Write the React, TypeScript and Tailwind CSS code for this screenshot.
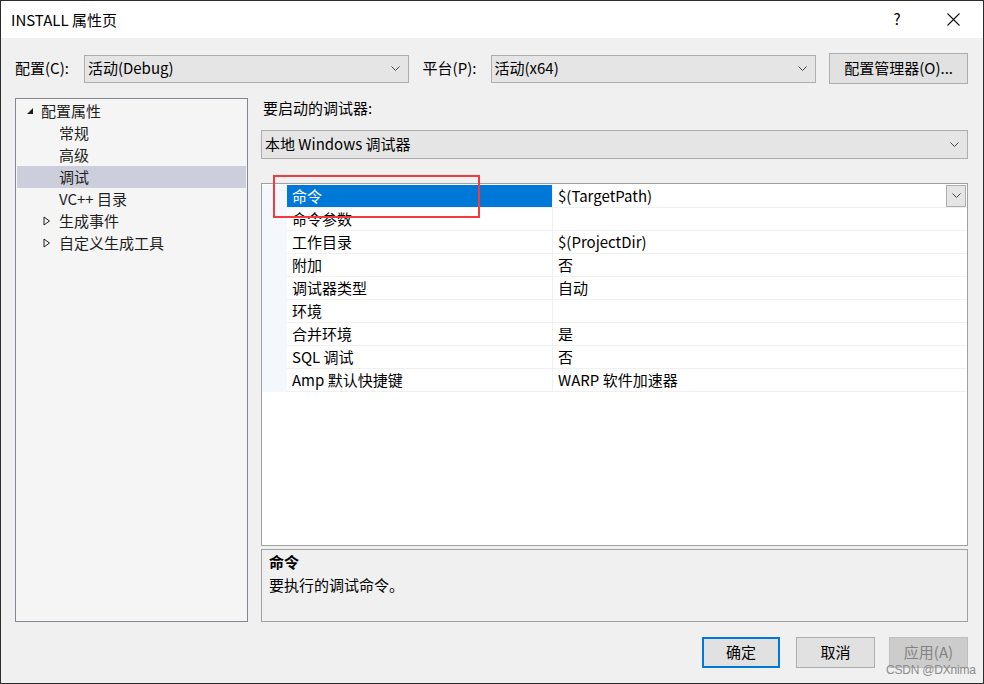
import React from "react";

const Chevron = () => (
  <svg width="9" height="6" viewBox="0 0 9 6" className="shrink-0">
    <polyline points="0.5,0.5 4.5,4.5 8.5,0.5" fill="none" stroke="#444" strokeWidth="1" />
  </svg>
);

const Combo = ({ text, w }: { text: string; w: string }) => (
  <div className={`${w} h-[28px] flex items-center justify-between border border-[#adadad] bg-[#e5e5e5] pl-[3px] pr-[8px] text-[15px] text-black`}>
    <span>{text}</span>
    <Chevron />
  </div>
);

const ExpandedTri = () => (
  <svg width="8" height="8" viewBox="0 0 8 8" className="shrink-0">
    <polygon points="7,1 7,7 1,7" fill="#1e1e1e" />
  </svg>
);

const CollapsedTri = () => (
  <svg width="8" height="10" viewBox="0 0 8 10" className="shrink-0">
    <polygon points="1,1 6.5,5 1,9" fill="none" stroke="#1e1e1e" strokeWidth="1" />
  </svg>
);

const treeItems: { label: string; kind: "root" | "child" | "collapsed"; selected?: boolean }[] = [
  { label: "配置属性", kind: "root" },
  { label: "常规", kind: "child" },
  { label: "高级", kind: "child" },
  { label: "调试", kind: "child", selected: true },
  { label: "VC++ 目录", kind: "child" },
  { label: "生成事件", kind: "collapsed" },
  { label: "自定义生成工具", kind: "collapsed" },
];

const props: [string, string][] = [
  ["命令", "$(TargetPath)"],
  ["命令参数", ""],
  ["工作目录", "$(ProjectDir)"],
  ["附加", "否"],
  ["调试器类型", "自动"],
  ["环境", ""],
  ["合并环境", "是"],
  ["SQL 调试", "否"],
  ["Amp 默认快捷键", "WARP 软件加速器"],
];

export default function App() {
  return (
    <div className="relative w-[984px] h-[684px] border border-[#2b2b2b] bg-[#f0f0f0] flex flex-col font-['Noto_Sans_CJK_SC','Noto_Sans',sans-serif] text-[14px] text-[#1e1e1e] overflow-hidden">
      {/* title bar */}
      <div className="h-[37px] bg-white flex items-center shrink-0">
        <div className="pl-[10px] text-[15px] text-black flex-1 leading-none">INSTALL 属性页</div>
        <div className="w-[56px] text-center text-[15px] text-black">?</div>
        <div className="w-[56px] flex justify-center items-center mr-[2px]">
          <svg width="13" height="13" viewBox="0 0 13 13">
            <path d="M0.5,0.5 L12.5,12.5 M12.5,0.5 L0.5,12.5" stroke="#111" strokeWidth="1.1" />
          </svg>
        </div>
      </div>

      {/* body */}
      <div className="flex-1 flex flex-col pl-[14px] pr-[15px]">
        {/* top row */}
        <div className="mt-[15px] h-[31px] flex items-center text-[15px] text-black">
          <div className="w-[69px]">配置(C):</div>
          <Combo text="活动(Debug)" w="w-[325px]" />
          <div className="w-[68px] ml-[14px]">平台(P):</div>
          <Combo text="活动(x64)" w="w-[326px]" />
          <div className="ml-[13px] w-[139px] h-[31px] border border-[#adadad] bg-[#e1e1e1] flex items-center justify-center">
            配置管理器(O)...
          </div>
        </div>

        {/* main */}
        <div className="mt-[14px] flex h-[524px]">
          {/* tree */}
          <div className="w-[233px] h-full border border-[#828790] bg-[#f5f5f5] pt-[1px] px-[1px] text-[15px] text-[#1e1e1e]">
            {treeItems.map((it) => (
              <div
                key={it.label}
                className={`h-[22px] flex items-center ${it.selected ? "bg-[#cccedb]" : ""}`}
              >
                {it.kind === "root" && (
                  <>
                    <div className="w-[24px] flex justify-end pr-[7px]"><ExpandedTri /></div>
                    <span>{it.label}</span>
                  </>
                )}
                {it.kind === "child" && <span className="pl-[42px]">{it.label}</span>}
                {it.kind === "collapsed" && (
                  <>
                    <div className="w-[42px] flex justify-end pr-[8px]"><CollapsedTri /></div>
                    <span>{it.label}</span>
                  </>
                )}
              </div>
            ))}
          </div>

          {/* right */}
          <div className="ml-[13px] flex-1 flex flex-col">
            <div className="h-[20px] flex items-center pl-[2px] text-[15px] text-black">要启动的调试器:</div>
            <div className="mt-[12px] h-[29px] flex items-center justify-between border border-[#adadad] bg-[#e5e5e5] pl-[3px] pr-[8px] text-[15px] text-black">
              <span>本地 Windows 调试器</span>
              <Chevron />
            </div>

            {/* property grid */}
            <div className="mt-[24px] h-[363px] border border-[#a0a0a0] bg-white pt-[1px]">
              <div className="flex">
                <div className="w-[25px] h-[207px] bg-[#f4f7fc]" />
                <div className="flex-1 flex flex-col">
                  {props.map(([k, v], i) => (
                    <div key={k} className="h-[23px] flex border-b border-[#f0f0f0] text-[15px]">
                      <div
                        className={`w-[266px] pl-[5px] flex items-center border-r border-[#f0f0f0] ${
                          i === 0 ? "bg-[#0078d7] text-white" : "text-black"
                        }`}
                      >
                        {k}
                      </div>
                      <div className="flex-1 pl-[5px] flex items-center justify-between text-black">
                        <span>{v}</span>
                        {i === 0 && (
                          <div className="w-[20px] h-[22px] border border-[#adadad] bg-[#e5e5e5] flex items-center justify-center mr-[1px]">
                            <Chevron />
                          </div>
                        )}
                      </div>
                    </div>
                  ))}
                </div>
              </div>
            </div>

            {/* description */}
            <div className="mt-[3px] flex-1 border border-[#a0a0a0] bg-[#f0f0f0] pl-[7px] pt-[1px] text-[15px] text-black">
              <div className="font-bold leading-[22px]">命令</div>
              <div className="leading-[24px]">要执行的调试命令。</div>
            </div>
          </div>
        </div>

        {/* buttons */}
        <div className="mt-[15px] flex justify-end text-[15px]">
          <div className="w-[78px] h-[31px] border-2 border-[#0078d7] bg-[#e1e1e1] flex items-center justify-center text-black">确定</div>
          <div className="ml-[16px] w-[79px] h-[31px] border border-[#adadad] bg-[#e1e1e1] flex items-center justify-center text-black">取消</div>
          <div className="ml-[14px] w-[79px] h-[31px] border border-[#bfbfbf] bg-[#cccccc] flex items-center justify-center text-[#838383]">应用(A)</div>
        </div>
      </div>

      {/* red annotation rectangle */}
      <div className="absolute left-[272px] top-[174px] w-[207px] h-[43px] border-2 border-[#f03c3c]" />

      {/* watermark */}
      <div className="absolute left-[885px] top-[660px] text-[12px] text-[#8a8a8a] font-['Liberation_Sans',sans-serif] tracking-[-0.2px]">
        CSDN @DXnima
      </div>
    </div>
  );
}
